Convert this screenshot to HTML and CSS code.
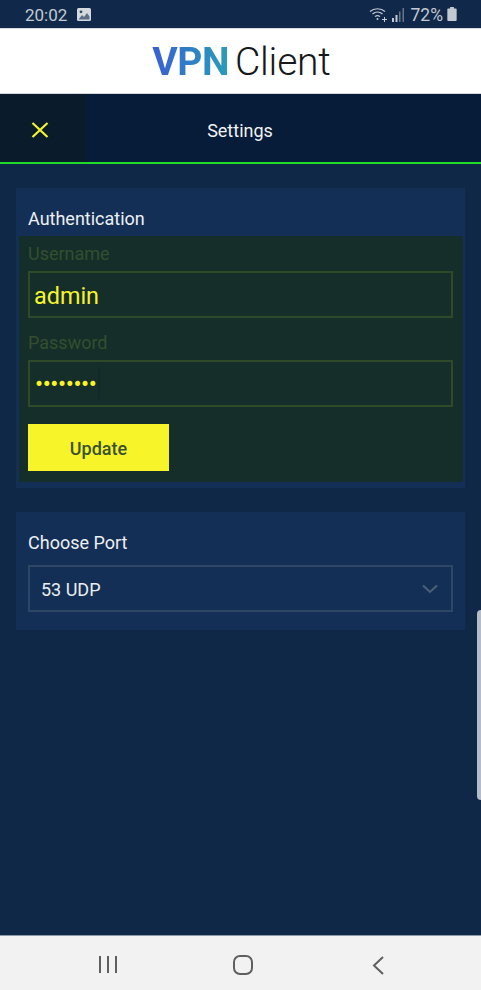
FILE: index.html
```html
<!DOCTYPE html>
<html lang="en">
<head>
<meta charset="utf-8">
<title>VPN Client</title>
<link rel="stylesheet" href="styles.css">
</head>
<body>
<div class="phone">
  <div class="status">
    <div class="status-left">
      <span class="time">20:02</span>
      <svg class="pic" width="14" height="13" viewBox="0 0 14 13"><rect width="14" height="13" rx="1.5" fill="#d5d9de"/><path d="M1.5 11.5 5 7l2 2 3-4 2.5 3.5v3z" fill="#5d6f86"/><circle cx="4" cy="3.8" r="1.4" fill="#31486a"/></svg>
    </div>
    <div class="status-right">
      <svg width="20" height="16" viewBox="0 0 20 16" fill="none" stroke="#c4cad2" stroke-width="1.2"><path d="M1 4.500C5 .8 12 .8 16 4.500"/><path d="M3.500 7c3-2.700 7-2.700 10 0"/><path d="M6 9.600c1.800-1.500 3.200-1.500 5 0"/><circle cx="8.500" cy="12" r="1" fill="#c4cad2" stroke="none"/><path d="M13 12.500h5M15.500 10v5" stroke-width="1"/></svg>
      <svg class="signal" width="14" height="14" viewBox="0 0 14 14"><rect x="1" y="10" width="2" height="4" fill="#c4cad2"/><rect x="4.500" y="7" width="2" height="7" fill="#c4cad2"/><rect x="8" y="3.500" width="1.500" height="10.500" fill="#66758a"/><rect x="11.500" y="0" width="1.500" height="14" fill="#66758a"/></svg>
      <span class="pct">72%</span>
      <svg class="batt" width="10" height="14" viewBox="0 0 10 15"><path d="M3 0h4v1.500h2a1 1 0 0 1 1 1V14a1 1 0 0 1-1 1H1a1 1 0 0 1-1-1V2.500a1 1 0 0 1 1-1h2z" fill="#c4cad2"/></svg>
    </div>
  </div>

  <div class="brand">
    <span class="brand-vpn">VPN</span><span class="brand-client">Client</span>
  </div>

  <div class="titlebar">
    <div class="close">
      <svg width="18" height="16" viewBox="0 0 18 16" fill="none" stroke="#f7f52a" stroke-width="2.200"><path d="M1.500 1 16.500 15M16.500 1 1.500 15"/></svg>
    </div>
    <div class="title">Settings</div>
    <div class="title-spacer"></div>
  </div>

  <main class="content">
    <section class="card auth">
      <h2 class="card-title auth-title">Authentication</h2>
      <div class="auth-body">
        <label class="field-label">Username</label>
        <div class="input"><span class="input-text">admin</span></div>
        <label class="field-label field-label-second">Password</label>
        <div class="input"><span class="dots">••••••••</span><span class="cursor"></span></div>
        <button class="update">Update</button>
      </div>
    </section>

    <section class="card port">
      <h2 class="card-title">Choose Port</h2>
      <div class="select">
        <span>53 UDP</span>
        <svg width="16" height="10" viewBox="0 0 16 10" fill="none" stroke="#4b6079" stroke-width="2"><path d="M1 1.500 8 8l7-6.500"/></svg>
      </div>
    </section>
  </main>

  <nav class="navbar">
    <svg width="18" height="18" viewBox="0 0 18 18" fill="none" stroke="#5f5f5f" stroke-width="2"><path d="M1 0v17M9 0v17M17 0v17"/></svg>
    <svg class="nav-home" width="20" height="20" viewBox="0 0 20 20" fill="none" stroke="#5f5f5f" stroke-width="2"><rect x="1" y="1" width="18" height="18" rx="6"/></svg>
    <svg width="12" height="19" viewBox="0 0 12 19" fill="none" stroke="#5f5f5f" stroke-width="2"><path d="M11 1 2 9.500l9 8.500"/></svg>
  </nav>

  <div class="edge-handle"></div>
</div>
</body>
</html>
```
FILE: styles.css
```css
* { box-sizing: border-box; }
html, body { margin: 0; padding: 0; }
body { font-family: Roboto, "Liberation Sans", sans-serif; background: #0f2848; }
.phone { position: relative; width: 481px; height: 990px; display: flex; flex-direction: column; overflow: hidden; background: #0f2848; }

.status { height: 28px; flex: none; display: flex; justify-content: space-between; align-items: center; padding: 1px 24px 0 25px; background: #10294a; color: #c4cad2; }
.status-left, .status-right { display: flex; align-items: center; }
.time { font-size: 17px; }
.pic { margin-left: 10px; margin-top: -1px; }
.status-right { gap: 2px; }
.pct { font-size: 17.500px; margin: 0 2px 0 4px; }
.batt { margin-top: -1px; }

.brand { height: 66px; flex: none; display: flex; justify-content: center; align-items: center; gap: 6px; padding: 2px 0 0 2px; background: #fff; border-top: 1px solid #d3d6da; border-bottom: 1px solid #d3d6da; font-size: 39px; line-height: 1; }
.brand-vpn { font-weight: 700; letter-spacing: -.5px; background: linear-gradient(90deg, #3a5fd2 0%, #2f82c4 55%, #2a9db8 100%); -webkit-background-clip: text; background-clip: text; color: transparent; }
.brand-client { font-weight: 300; color: #16181c; letter-spacing: -.2px; }

.titlebar { height: 68px; flex: none; display: flex; align-items: stretch; background: #071c38; }
.close { width: 87px; display: flex; align-items: center; justify-content: center; padding-right: 7px; padding-top: 4px; background: #0a1c2c; }
.title { flex: 1; display: flex; align-items: center; justify-content: center; padding-right: 1px; padding-top: 4px; color: #f1f3f5; font-size: 18px; }
.title-spacer { width: 87px; }

.content { flex: 1; padding: 24px 16px 0; display: flex; flex-direction: column; gap: 24px; border-top: 2.500px solid #22dc2c; }

.card { background: #132f56; width: 449px; }
.card-title { margin: 0; font-weight: 400; font-size: 18px; line-height: 22px; color: #edf0f3; }
.auth { height: 300px; padding: 0 2px 6px 3px; }
.auth-title { height: 48px; padding: 20px 0 0 9px; }
.auth-body { height: 246px; padding: 7px 10px 0 9px; background: #152e2a; display: flex; flex-direction: column; align-items: flex-start; }
.field-label { font-size: 18px; line-height: 22px; color: #344f2e; height: 28px; }
.field-label-second { margin-top: 14px; }
.input { position: relative; width: 425px; height: 47px; flex: none; border: 2px solid #2f4a28; display: flex; align-items: center; padding-left: 4px; }
.input-text { color: #f7f52a; font-size: 23.400px; padding-top: 2px; }
.dots { color: #f7f52a; font-size: 17px; letter-spacing: -2.350px; font-family: "DejaVu Sans", sans-serif; }
.cursor { position: absolute; left: 68px; top: 5px; width: 2px; height: 32px; background: #12292c; }
.update { width: 141px; height: 47px; margin-top: 17px; border: 0; padding: 1px 0 0; background: #f7f52a; color: #3a5230; font-family: inherit; font-size: 18px; font-weight: 500; }

.port { height: 118px; padding: 20px 12px 0; }
.select { height: 47px; margin-top: 11px; border: 2px solid #2f4767; display: flex; align-items: center; justify-content: space-between; padding: 2px 13px 0 11px; color: #eaedf1; font-size: 18px; }
.select svg { margin-bottom: 1px; }

.navbar { height: 55px; flex: none; display: flex; align-items: center; background: #f2f2f2; border-top: 1px solid #8a98a8; padding: 4px 0 0 99px; }
.nav-home { margin: 0 119px 0 116px; }
.edge-handle { position: absolute; right: 0; top: 610px; width: 4px; height: 190px; background: #b4bcc8; border-radius: 4px 0 0 4px; }
```
